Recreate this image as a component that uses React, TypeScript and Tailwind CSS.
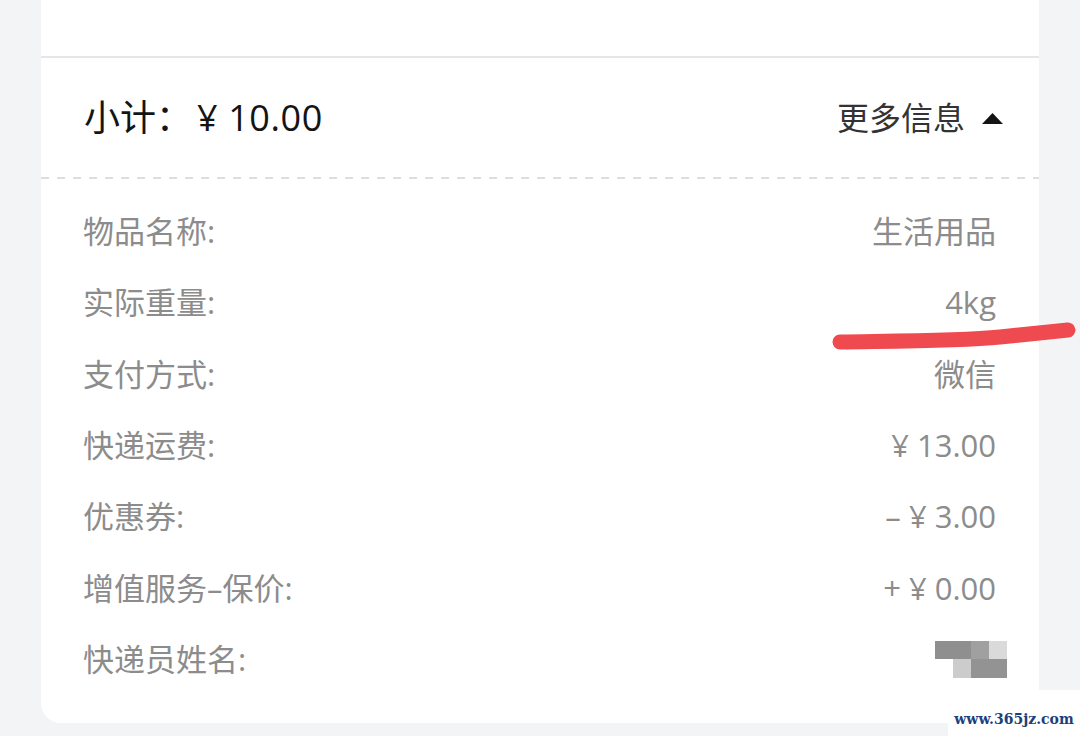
import React from "react";

const rows: { label: string; value: React.ReactNode }[] = [
  { label: "物品名称:", value: "生活用品" },
  { label: "实际重量:", value: "4kg" },
  { label: "支付方式:", value: "微信" },
  { label: "快递运费:", value: "¥ 13.00" },
  { label: "优惠券:", value: "– ¥ 3.00" },
  { label: "增值服务–保价:", value: "+ ¥ 0.00" },
  { label: "快递员姓名:", value: null },
];

function Mosaic() {
  return (
    <div className="grid grid-cols-[18px_18px_18px_18px] grid-rows-[18px_19px] mr-[-11px]">
      <div className="bg-[#8f8f8f]" />
      <div className="bg-[#8f8f8f]" />
      <div className="bg-[#a0a0a0]" />
      <div className="bg-[#dadada]" />
      <div className="bg-white" />
      <div className="bg-[#cccccc]" />
      <div className="bg-[#939393]" />
      <div className="bg-[#939393]" />
    </div>
  );
}

export default function App() {
  const font = { fontFamily: '"Open Sans", "Noto Sans CJK SC", sans-serif' };
  return (
    <div className="relative w-[1080px] h-[736px] overflow-hidden bg-[#f3f4f6]" style={font}>
      <div className="ml-[41px] w-[998px]">
        <div className="h-[58px] bg-white border-b-2 border-[#e6e6e8]" />
        <div className="bg-white rounded-b-[20px] h-[665px]">
          <div className="h-[119px] flex items-center justify-between pl-[43px] pr-[36px]">
            <div className="text-[36px] text-[#141414] leading-none">
              小计：<span className="ml-[5px] tracking-[0.6px]">¥ 10.00</span>
            </div>
            <div className="flex items-center gap-[17px]">
              <span className="text-[32px] text-[#333] leading-none">更多信息</span>
              <svg width="21" height="11" viewBox="0 0 21 11" className="mt-[1px]">
                <path d="M10.5 0 L21 11 L0 11 Z" fill="#141414" />
              </svg>
            </div>
          </div>
          <div className="h-[2px] bg-[repeating-linear-gradient(90deg,#dedede_0_8px,transparent_8px_16px)]" />
          <div className="pt-[17px] flex flex-col">
            {rows.map((r) => (
              <div key={r.label} className="h-[71.3px] flex items-center justify-between pl-[42px] pr-[43px]">
                <span className="text-[31px] text-[#8c8c8c] leading-none">{r.label}</span>
                {r.value === null ? (
                  <Mosaic />
                ) : (
                  <span className="text-[31px] text-[#8c8c8c] leading-none">{r.value}</span>
                )}
              </div>
            ))}
          </div>
        </div>
      </div>

      <svg className="absolute left-0 top-0 pointer-events-none" width="1080" height="736">
        <path
          d="M840 342 C 900 341, 960 341, 1000 337 S 1060 331, 1068 330"
          stroke="#ef4a50"
          strokeWidth="15"
          strokeLinecap="round"
          fill="none"
        />
      </svg>

      <div className="absolute right-0 bottom-0 w-[132px] h-[46px] bg-white flex items-end justify-center pb-[6px]">
        <span
          className="text-[14px] font-bold text-[#1d3f7c]"
          style={{ fontFamily: '"DejaVu Serif", serif' }}
        >
          www.365jz.com
        </span>
      </div>
    </div>
  );
}
